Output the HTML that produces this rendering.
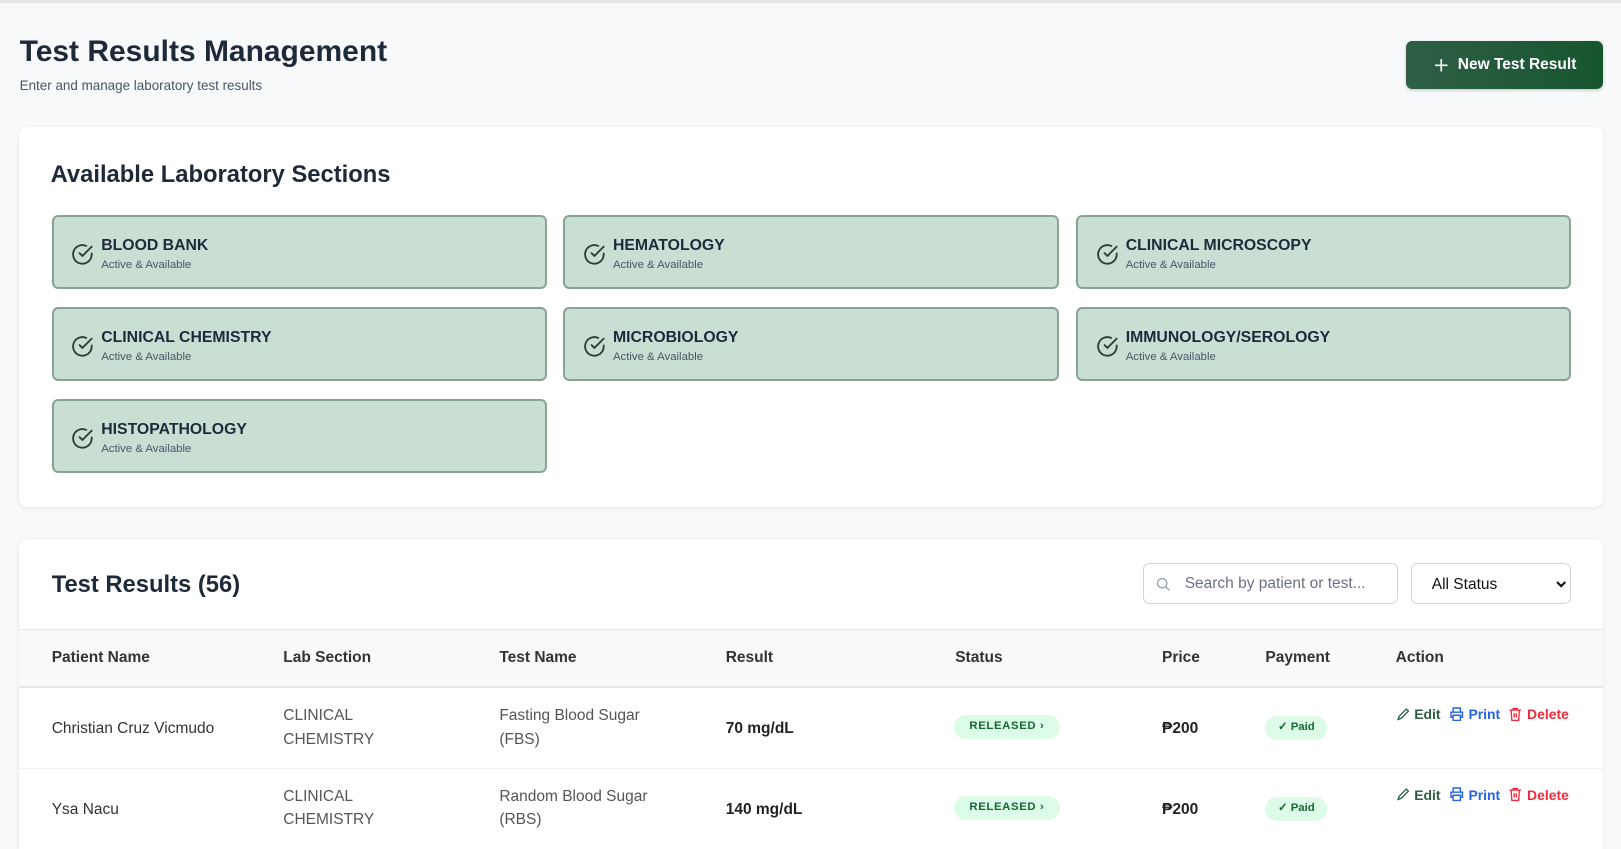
<!DOCTYPE html>
<html><head><meta charset="utf-8"><style>
html,body{margin:0;padding:0;}
body{width:1568px;height:796px;overflow:hidden;background:#f8f9fb;font-family:"Liberation Sans",Arial,sans-serif;color:#1e2939;zoom:1.03380;position:relative;}
.topline{position:absolute;left:0;top:0;width:100%;height:3px;background:#e4e6ea;}
.abs{position:absolute;}
h1{position:absolute;left:19px;top:34px;margin:0;font-size:29px;font-weight:bold;color:#1e2939;}
.sub{left:19px;top:75px;font-size:13px;color:#4a5565;}
.btn{left:1360px;top:40px;width:191px;height:46px;border-radius:6px;background:linear-gradient(90deg,#2f5e45,#17562f);color:#fff;font-weight:bold;font-size:15px;display:flex;align-items:center;justify-content:center;gap:8px;box-shadow:0 1px 3px rgba(0,0,0,.2);}
.card{background:#fff;border-radius:8px;box-shadow:0 1px 4px rgba(0,0,0,.08);}
.h2{font-size:23px;font-weight:bold;color:#1e2939;}
.tile{position:absolute;width:479px;height:72px;background:#cadfd4;border:2px solid #86a394;border-radius:6px;box-sizing:border-box;}
.tile svg{position:absolute;left:16px;top:24px;}
.tile .t{position:absolute;left:46px;top:19px;font-size:15.3px;font-weight:bold;color:#1e2939;}
.tile .s{position:absolute;left:46px;top:41px;font-size:11px;color:#4a5565;}
.th{position:absolute;top:628px;font-size:15px;font-weight:bold;color:#333;}
.td{position:absolute;font-size:15px;color:#333;line-height:23px;}
.gray{color:#555;}
.b{font-weight:bold;color:#222;}
.rel{position:absolute;width:102px;height:23px;border-radius:12px;background:#dcfce7;color:#166534;font-size:11px;font-weight:bold;letter-spacing:.6px;text-align:center;line-height:23px;}
.paid{position:absolute;width:60px;height:23px;border-radius:12px;background:#dcfce7;color:#166534;font-size:11px;font-weight:bold;text-align:center;line-height:23px;}
.act{position:absolute;font-size:13.5px;font-weight:bold;display:flex;gap:8px;align-items:center;}
.act span{display:flex;align-items:center;gap:4px;}
</style></head><body>
<div class="topline"></div>
<h1>Test Results Management</h1>
<div class="abs sub">Enter and manage laboratory test results</div>
<div class="abs btn"><svg width="16" height="16" viewBox="0 0 16 16"><path d="M8 2v12M2 8h12" stroke="#fff" stroke-width="1.6"/></svg>New Test Result</div>

<div class="abs card" style="left:18px;top:123px;width:1533px;height:367px;"></div>
<div class="abs h2" style="left:49px;top:156px;">Available Laboratory Sections</div>
<div id="tiles"></div>

<div class="abs card" style="left:18px;top:521px;width:1533px;height:300px;border-radius:8px 8px 0 0;"></div>
<div class="abs h2" style="left:50px;top:552px;">Test Results (56)</div>
<div class="abs" style="left:1106px;top:545px;width:246px;height:39px;border:1px solid #d1d5db;border-radius:6px;box-sizing:border-box;background:#fff;">
<svg class="abs" style="left:11px;top:12px" width="15" height="15" viewBox="0 0 15 15"><circle cx="6" cy="6" r="4.5" fill="none" stroke="#9ca3af" stroke-width="1.3"/><path d="M9.5 9.5l3.5 3.5" stroke="#9ca3af" stroke-width="1.3"/></svg>
<div class="abs" style="left:39px;top:10px;font-size:15px;color:#6b7280;">Search by patient or test...</div></div>
<div class="abs" style="left:1365px;top:545px;width:155px;height:39px;border:1px solid #d1d5db;border-radius:6px;box-sizing:border-box;background:#fff;">
<div class="abs" style="left:19px;top:11px;font-size:15px;color:#111;">All Status</div>
<svg class="abs" style="left:139px;top:16px" width="10" height="7" viewBox="0 0 10 7"><path d="M1 1l4 4 4-4" fill="none" stroke="#111" stroke-width="2"/></svg></div>
<div class="abs" style="left:18px;top:608px;width:1533px;height:55px;background:#f8f9fb;border-top:1px solid #e5e7eb;border-bottom:2px solid #e5e7eb;"></div>
<div class="th" style="left:50px">Patient Name</div><div class="th" style="left:274px">Lab Section</div><div class="th" style="left:483px">Test Name</div><div class="th" style="left:702px">Result</div><div class="th" style="left:924px">Status</div><div class="th" style="left:1124px">Price</div><div class="th" style="left:1224px">Payment</div><div class="th" style="left:1350px">Action</div>
<div class="abs" style="left:18px;top:743px;width:1533px;height:1px;background:#eef0f3;"></div>
<div id="rows"></div>
<script>
var chk='<svg width="24" height="24" viewBox="0 0 24 24" fill="none" stroke="#2d3e36" stroke-width="1.8" stroke-linecap="round" stroke-linejoin="round"><path d="M21 11.1V12a9 9 0 1 1-5.3-8.2"/><path d="M21 4.5 12 13.5l-2.7-2.7"/></svg>';
var names=["BLOOD BANK","HEMATOLOGY","CLINICAL MICROSCOPY","CLINICAL CHEMISTRY","MICROBIOLOGY","IMMUNOLOGY/SEROLOGY","HISTOPATHOLOGY"];
var xs=[50,545,1041],ys=[208,297,386],h='';
names.forEach(function(n,i){h+='<div class="tile" style="left:'+xs[i%3]+'px;top:'+ys[Math.floor(i/3)]+'px">'+chk+'<div class="t">'+n+'</div><div class="s">Active &amp; Available</div></div>';});
document.getElementById('tiles').innerHTML=h;
var ed='<svg width="14" height="14" viewBox="0 0 14 14" fill="none" stroke="#2f5e45" stroke-width="1.3"><path d="M2 12l1-3 7-7 2 2-7 7z"/></svg>';
var pr='<svg width="15" height="14" viewBox="0 0 15 14" fill="none" stroke="#2563eb" stroke-width="1.4"><path d="M4 5V1h7v4M4 10H2V5h11v5h-2M4 8h7v5H4z"/></svg>';
var de='<svg width="14" height="14" viewBox="0 0 14 14" fill="none" stroke="#ef2b3b" stroke-width="1.3"><path d="M1.5 3h11M5 3V1.5h4V3M3 3l.7 10h6.6L11 3M6 6v4M8 6v4"/></svg>';
var rows=[["Christian Cruz Vicmudo","Fasting Blood Sugar","(FBS)","70 mg/dL",667],["Ysa Nacu","Random Blood Sugar","(RBS)","140 mg/dL",745]],r='';
rows.forEach(function(x){var t=x[4];
r+='<div class="td" style="left:50px;top:'+(t+27)+'px">'+x[0]+'</div>';
r+='<div class="td gray" style="left:274px;top:'+(t+14)+'px">CLINICAL<br>CHEMISTRY</div>';
r+='<div class="td gray" style="left:483px;top:'+(t+14)+'px">'+x[1]+'<br>'+x[2]+'</div>';
r+='<div class="td b" style="left:702px;top:'+(t+27)+'px">'+x[3]+'</div>';
r+='<div class="rel" style="left:923px;top:'+(t+25)+'px">RELEASED &rsaquo;</div>';
r+='<div class="td b" style="left:1124px;top:'+(t+27)+'px">&#8369;200</div>';
r+='<div class="paid" style="left:1224px;top:'+(t+26)+'px">&#10003; Paid</div>';
r+='<div class="act" style="left:1350px;top:'+(t+16)+'px"><span style="color:#2f5e45">'+ed+'Edit</span><span style="color:#2563eb">'+pr+'Print</span><span style="color:#ef2b3b">'+de+'Delete</span></div>';});
document.getElementById('rows').innerHTML=r;
</script>
</body></html>
